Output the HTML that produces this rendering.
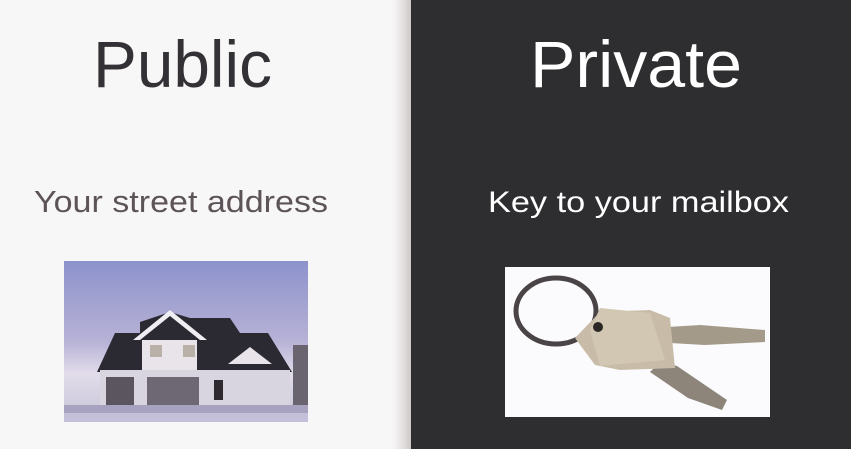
<!DOCTYPE html>
<html><head><style>
html,body{margin:0;padding:0;width:851px;height:449px;overflow:hidden;background:#f8f7f7}
</style></head><body>
<svg width="851" height="449" xmlns="http://www.w3.org/2000/svg" style="position:absolute;left:0;top:0">
<defs>
<linearGradient id="div" x1="0" x2="1">
<stop offset="0" stop-color="#f8f7f7"/><stop offset="0.5" stop-color="#e6e2e2"/><stop offset="1" stop-color="#cbc5c5"/>
</linearGradient>
<linearGradient id="sky" x1="0" y1="0" x2="0" y2="1">
<stop offset="0" stop-color="#8d92cc"/><stop offset="0.5" stop-color="#b7b2d6"/><stop offset="0.7" stop-color="#e2dcea"/><stop offset="1" stop-color="#c6c4d8"/>
</linearGradient>
</defs>
<rect x="0" y="0" width="851" height="449" fill="#f8f7f7"/>
<rect x="392" y="0" width="20" height="449" fill="url(#div)"/>
<rect x="411" y="0" width="440" height="449" fill="#2e2d2f"/>

<text x="93" y="87" font-family="Liberation Sans, sans-serif" font-size="66" fill="#333135" textLength="179" lengthAdjust="spacingAndGlyphs">Public</text>
<text x="530" y="87" font-family="Liberation Sans, sans-serif" font-size="66" fill="#ffffff" textLength="212" lengthAdjust="spacingAndGlyphs">Private</text>
<text x="34" y="212" font-family="Liberation Sans, sans-serif" font-size="31" fill="#5c5459" textLength="294" lengthAdjust="spacingAndGlyphs">Your street address</text>
<text x="488" y="212" font-family="Liberation Sans, sans-serif" font-size="30" fill="#ffffff" textLength="301" lengthAdjust="spacingAndGlyphs">Key to your mailbox</text>

<!-- house image -->
<rect x="64" y="261" width="244" height="161" fill="url(#sky)"/>
<polygon points="97,372 115,333 140,333 140,322 170,312 190,318 230,318 240,333 268,333 292,372" fill="#2b2a33"/>
<polygon points="133,340 170,310 207,340" fill="#f0eef2"/>
<polygon points="140,340 170,316 200,340" fill="#2b2a33"/>
<rect x="142" y="340" width="55" height="30" fill="#e8e4ea"/>
<rect x="150" y="345" width="12" height="12" fill="#b9b0a8"/>
<rect x="183" y="345" width="12" height="12" fill="#b9b0a8"/>
<rect x="100" y="370" width="190" height="38" fill="#d8d5e0"/>
<rect x="106" y="377" width="28" height="30" fill="#5b5560"/>
<rect x="147" y="377" width="52" height="30" fill="#6e6874"/>
<rect x="214" y="380" width="9" height="20" fill="#2e2a30"/>
<polygon points="228,364 250,347 272,364" fill="#e8e4ea"/>
<rect x="64" y="405" width="244" height="17" fill="#a6a2c0"/>
<rect x="64" y="413" width="244" height="9" fill="#c4c0da"/>
<rect x="293" y="345" width="15" height="60" fill="#6a6470"/>

<!-- keys image -->
<rect x="505" y="267" width="265" height="150" fill="#fbfbfd"/>
<ellipse cx="556" cy="311" rx="40" ry="33" fill="none" stroke="#4a4446" stroke-width="5"/>
<polygon points="668,327 700,325 765,330 765,342 705,345 670,343" fill="#a49a8a"/>
<polygon points="660,362 677,366 727,400 722,410 688,398 650,372" fill="#8e857a"/>
<polygon points="575,338 600,312 650,310 670,318 675,368 620,370 595,365" fill="#c8bca8"/>
<polygon points="600,308 650,313 665,360 600,366 590,330" fill="#d2c7b3"/>
<circle cx="598" cy="327" r="5" fill="#2b2626"/>
</svg>
</body></html>
